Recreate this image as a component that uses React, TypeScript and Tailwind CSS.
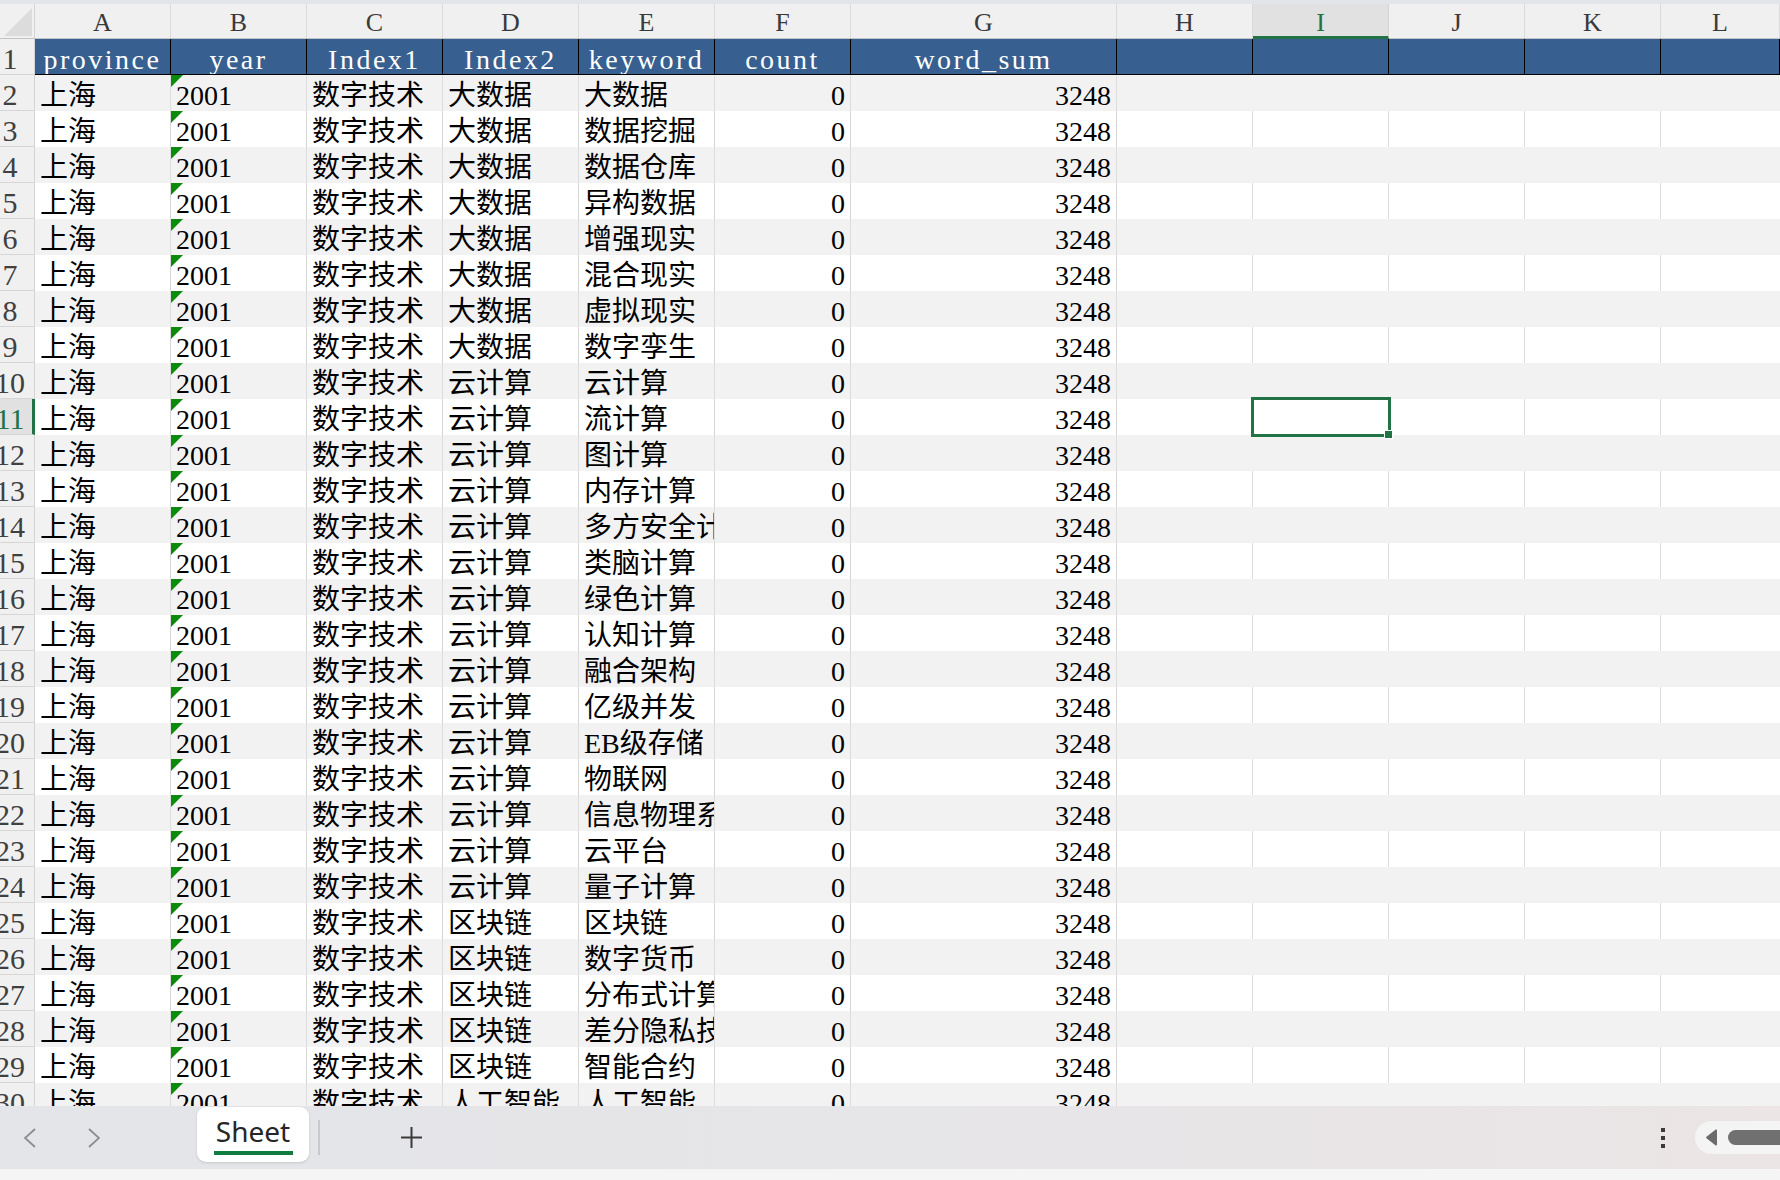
import type { ReactNode } from 'react';

const ROWS: [string, string][] = [
  ['大数据', '大数据'],
  ['大数据', '数据挖掘'],
  ['大数据', '数据仓库'],
  ['大数据', '异构数据'],
  ['大数据', '增强现实'],
  ['大数据', '混合现实'],
  ['大数据', '虚拟现实'],
  ['大数据', '数字孪生'],
  ['云计算', '云计算'],
  ['云计算', '流计算'],
  ['云计算', '图计算'],
  ['云计算', '内存计算'],
  ['云计算', '多方安全计算'],
  ['云计算', '类脑计算'],
  ['云计算', '绿色计算'],
  ['云计算', '认知计算'],
  ['云计算', '融合架构'],
  ['云计算', '亿级并发'],
  ['云计算', 'EB级存储'],
  ['云计算', '物联网'],
  ['云计算', '信息物理系统'],
  ['云计算', '云平台'],
  ['云计算', '量子计算'],
  ['区块链', '区块链'],
  ['区块链', '数字货币'],
  ['区块链', '分布式计算'],
  ['区块链', '差分隐私技术'],
  ['区块链', '智能合约'],
  ['人工智能', '人工智能'],
];

const LETTERS = ['A', 'B', 'C', 'D', 'E', 'F', 'G', 'H', 'I', 'J', 'K', 'L'];
const HEADERS = ['province', 'year', 'Index1', 'Index2', 'keyword', 'count', 'word_sum', '', '', '', '', ''];

const GRID = 'grid grid-cols-[35px_repeat(6,136px)_266px_repeat(4,136px)_1fr]';
const SERIF = 'font-["Liberation_Serif","Noto_Sans_CJK_SC",serif]';

function RowNum({ n, active }: { n: number; active?: boolean }) {
  return (
    <div
      className={`h-full overflow-hidden border-b border-[#d6d6d6] ${
        active
          ? 'bg-[#e1e1e1] text-[#217346] border-r-[3px] border-r-[#217346]'
          : 'bg-[#f0f0f0] text-[#404040] border-r border-r-[#d4d4d4]'
      }`}
    >
      <span className={`block w-[40px] -ml-[10px] text-center text-[30px] leading-[36px] pt-[2px] ${SERIF}`}>{n}</span>
    </div>
  );
}

function Cell({ children, line, right, tri }: { children?: ReactNode; line: string; right?: boolean; tri?: boolean }) {
  return (
    <div
      className={`relative h-full overflow-hidden whitespace-nowrap border-r ${line} px-[5px] pt-[5px] flex items-center ${
        right ? 'justify-end' : ''
      }`}
    >
      {tri && (
        <svg className="absolute left-0 top-0" width="12" height="12" viewBox="0 0 12 12">
          <polygon points="0,0 12,0 0,12" fill="#0b8a0b" />
        </svg>
      )}
      {children}
    </div>
  );
}

function DataRow({ n, idx2, kw }: { n: number; idx2: string; kw: string }) {
  const gray = n % 2 === 0;
  const dataLine = gray ? 'border-[#dddddd]' : 'border-[#d6d6d6]';
  const emptyLine = gray ? 'border-transparent' : 'border-[#dadada]';
  return (
    <div className={`${GRID} h-[36px] shrink-0 text-[28px] leading-[32px] text-black ${SERIF} ${gray ? 'bg-[#f2f2f2]' : 'bg-white'}`}>
      <RowNum n={n} active={n === 11} />
      <Cell line={dataLine}>上海</Cell>
      <Cell line={dataLine} tri>
        2001
      </Cell>
      <Cell line={dataLine}>数字技术</Cell>
      <Cell line={dataLine}>{idx2}</Cell>
      <Cell line={dataLine}>{kw}</Cell>
      <Cell line={dataLine} right>
        0
      </Cell>
      <Cell line={dataLine} right>
        3248
      </Cell>
      <Cell line={emptyLine} />
      <div className={`relative h-full border-r ${emptyLine}`}>
        {n === 11 && (
          <div className="absolute -left-[2px] -right-[3px] -top-[2px] -bottom-[2px] z-10 border-[3px] border-[#217346]">
            <div className="absolute -right-[5px] -bottom-[5px] w-[9px] h-[9px] bg-[#217346] border border-white" />
          </div>
        )}
      </div>
      <Cell line={emptyLine} />
      <Cell line={emptyLine} />
      <div className="h-full" />
    </div>
  );
}

export default function App() {
  return (
    <div className="w-[1780px] h-[1180px] flex flex-col overflow-hidden bg-white">
      <div className="h-[4px] shrink-0 bg-[#e2e5e9]" />
      <div className="flex-1 min-h-0 flex flex-col overflow-hidden">
        {/* column letters */}
        <div className={`${GRID} h-[35px] shrink-0 bg-[#f0f0f0] border-b border-[#c4c4c4] text-[26px] leading-[30px] ${SERIF}`}>
          <div className="relative h-full border-r border-[#d4d4d4]">
            <svg className="absolute left-[4px] top-[4px]" width="28" height="28" viewBox="0 0 28 28">
              <polygon points="28,0 28,28 0,28" fill="#dcdcdc" />
            </svg>
          </div>
          {LETTERS.map((l) =>
            l === 'I' ? (
              <div
                key={l}
                className="h-[35px] -mb-px flex items-center justify-center pt-[6px] bg-[#e1e1e1] text-[#217346] border-r border-[#d4d4d4] border-b-[3px] border-b-[#217346]"
              >
                {l}
              </div>
            ) : (
              <div key={l} className="h-full flex items-center justify-center pt-[3px] text-[#3a3a3a] border-r border-[#dadada]">
                {l}
              </div>
            )
          )}
        </div>
        {/* header row */}
        <div className={`${GRID} h-[36px] shrink-0`}>
          <RowNum n={1} />
          {HEADERS.map((h, i) => (
            <div
              key={i}
              className={`h-full bg-[#375f8f] border-r border-b border-black flex items-center justify-center pt-[6px] overflow-hidden whitespace-nowrap text-white text-[28px] leading-[30px] tracking-[2.5px] ${SERIF}`}
            >
              {h}
            </div>
          ))}
        </div>
        {ROWS.map(([idx2, kw], i) => (
          <DataRow key={i} n={i + 2} idx2={idx2} kw={kw} />
        ))}
      </div>
      {/* sheet bar */}
      <div className="h-[63px] shrink-0 flex items-center bg-gradient-to-r from-[#e3e5e8] via-[#e6e5e8] to-[#ebe5e5]">
        <svg className="ml-[24px]" width="12" height="20" viewBox="0 0 12 20">
          <polyline points="11,1 1,10 11,19" fill="none" stroke="#8c8c8c" strokeWidth="1.8" />
        </svg>
        <svg className="ml-[52px]" width="12" height="20" viewBox="0 0 12 20">
          <polyline points="1,1 11,10 1,19" fill="none" stroke="#8c8c8c" strokeWidth="1.8" />
        </svg>
        <div className="self-start mt-[1px] ml-[97px] w-[112px] h-[55px] bg-white rounded-[9px] shadow-sm flex flex-col items-center pt-[7px]">
          <span className='text-[28px] leading-[34px] text-[#262626] font-["Noto_Sans","Open_Sans",sans-serif]'>Sheet</span>
          <div className="mt-[3px] w-[79px] h-[4px] bg-[#107c41]" />
        </div>
        <div className="ml-[9px] w-[2px] h-[35px] bg-[#c9c9c9]" />
        <svg className="ml-[80px]" width="23" height="23" viewBox="0 0 23 23">
          <path d="M11.5 1v21M1 11.5h21" stroke="#3a3a3a" strokeWidth="2" />
        </svg>
        <div className="flex-1" />
        <div className="flex flex-col gap-[4px]">
          <div className="w-[4px] h-[4px] bg-[#3a3a3a]" />
          <div className="w-[4px] h-[4px] bg-[#3a3a3a]" />
          <div className="w-[4px] h-[4px] bg-[#3a3a3a]" />
        </div>
        <div className="ml-[30px] -mr-[40px] w-[125px] h-[33px] rounded-full bg-[#f4f4f4] flex items-center pl-[10px] gap-[10px]">
          <svg width="13" height="17" viewBox="0 0 13 17">
            <path d="M12 1.5v14a1 1 0 0 1-1.6.8L1.5 9.3a1 1 0 0 1 0-1.6l8.9-7a1 1 0 0 1 1.6.8z" fill="#6b6b6b" />
          </svg>
          <div className="w-[90px] h-[15px] rounded-full bg-[#707070]" />
        </div>
      </div>
      <div className="h-[11px] shrink-0 bg-[#f5f5f5]" />
    </div>
  );
}
